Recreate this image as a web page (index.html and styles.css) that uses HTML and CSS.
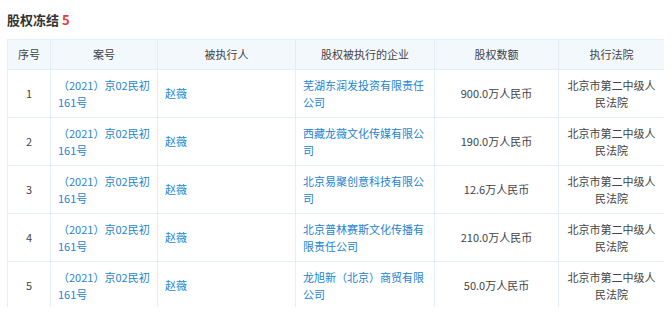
FILE: index.html
```html
<!DOCTYPE html>
<html lang="zh-CN">
<head>
    <meta charset="UTF-8">
    <title>股权冻结</title>
    <link rel="stylesheet" href="styles.css">
</head>
<body>
    <h3 class="section-title">股权冻结 <span class="count">5</span></h3>

    <div class="table-wrap">
        <table class="freeze-table">
            <colgroup>
                <col style="width: 43px">
                <col style="width: 107px">
                <col style="width: 138px">
                <col style="width: 139px">
                <col style="width: 124px">
                <col style="width: 106px">
            </colgroup>
            <thead>
                <tr>
                    <th>序号</th>
                    <th>案号</th>
                    <th>被执行人</th>
                    <th>股权被执行的企业</th>
                    <th>股权数额</th>
                    <th>执行法院</th>
                </tr>
            </thead>
            <tbody>
                <tr>
                    <td class="center">1</td>
                    <td><a href="#">（2021）京02民初161号</a></td>
                    <td><a href="#">赵薇</a></td>
                    <td><a href="#">芜湖东润发投资有限责任公司</a></td>
                    <td class="center">900.0万人民币</td>
                    <td class="center">北京市第二中级人民法院</td>
                </tr>
                <tr>
                    <td class="center">2</td>
                    <td><a href="#">（2021）京02民初161号</a></td>
                    <td><a href="#">赵薇</a></td>
                    <td><a href="#">西藏龙薇文化传媒有限公司</a></td>
                    <td class="center">190.0万人民币</td>
                    <td class="center">北京市第二中级人民法院</td>
                </tr>
                <tr>
                    <td class="center">3</td>
                    <td><a href="#">（2021）京02民初161号</a></td>
                    <td><a href="#">赵薇</a></td>
                    <td><a href="#">北京易聚创意科技有限公司</a></td>
                    <td class="center">12.6万人民币</td>
                    <td class="center">北京市第二中级人民法院</td>
                </tr>
                <tr>
                    <td class="center">4</td>
                    <td><a href="#">（2021）京02民初161号</a></td>
                    <td><a href="#">赵薇</a></td>
                    <td><a href="#">北京普林赛斯文化传播有限责任公司</a></td>
                    <td class="center">210.0万人民币</td>
                    <td class="center">北京市第二中级人民法院</td>
                </tr>
                <tr>
                    <td class="center">5</td>
                    <td><a href="#">（2021）京02民初161号</a></td>
                    <td><a href="#">赵薇</a></td>
                    <td><a href="#">龙旭新（北京）商贸有限公司</a></td>
                    <td class="center">50.0万人民币</td>
                    <td class="center">北京市第二中级人民法院</td>
                </tr>
            </tbody>
        </table>
    </div>
</body>
</html>
```

FILE: styles.css
```css
body {
    margin: 0;
    padding: 0 8px 0 7px;
    background-color: #fff;
    font-family: "Noto Sans CJK SC", "Liberation Sans", sans-serif;
    color: #444;
}
.section-title {
    margin: 0;
    padding-top: 10px;
    height: 39px;
    box-sizing: border-box;
    font-size: 13px;
    font-weight: bold;
    line-height: 20px;
    color: #333;
}
.count {
    color: #e8393a;
}
.table-wrap {
    height: 268px;
    overflow: hidden;
}
.freeze-table {
    width: 657px;
    table-layout: fixed;
    border-collapse: collapse;
    font-size: 11px;
    line-height: 17px;
}
.freeze-table th,
.freeze-table td {
    border: 1px solid #e7eef3;
    padding: 6px 7px;
    vertical-align: middle;
    word-break: break-all;
}
.freeze-table th {
    height: 17px;
    background-color: #f3f8fc;
    font-weight: normal;
    color: #444;
    text-align: center;
}
.freeze-table td {
    height: 35px;
    text-align: left;
}
.freeze-table td.center {
    text-align: center;
}
.freeze-table a {
    color: #2383d2;
    text-decoration: none;
}
```
